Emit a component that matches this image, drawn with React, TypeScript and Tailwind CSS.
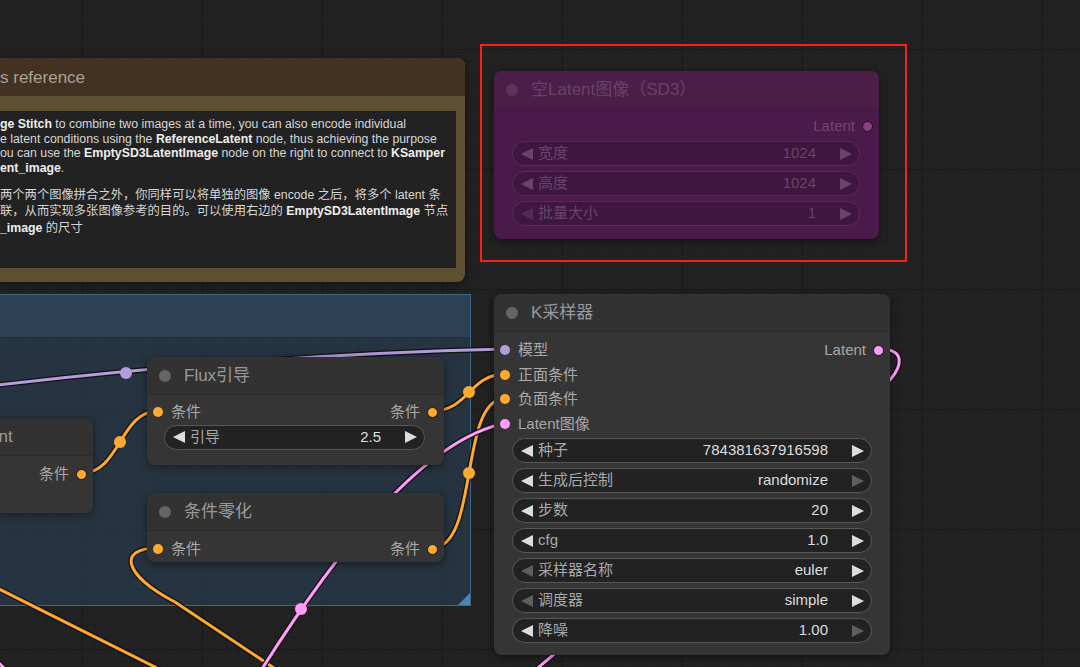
import React from "react";
import clsx from "clsx";

type ArrowProps = { right?: boolean; dim?: boolean; muted?: boolean; className?: string };

function Arrow({ right, dim, muted, className }: ArrowProps) {
  const fill = muted ? (dim ? "#552a53" : "#6a4468") : dim ? "#5e5e5e" : "#dddddd";
  return (
    <svg width="12" height="12" viewBox="0 0 12 12" className={clsx("shrink-0", className)}>
      <path d={right ? "M0 0L12 6L0 12Z" : "M12 0L0 6L12 12Z"} fill={fill} />
    </svg>
  );
}

type WidgetProps = { label: string; value: string; dimL?: boolean; dimR?: boolean; muted?: boolean };

function Widget({ label, value, dimL, dimR, muted }: WidgetProps) {
  return (
    <div
      className={clsx(
        "flex h-[25px] shrink-0 items-center rounded-full border pl-[8px] pr-[7px] text-[15px]",
        muted ? "border-[#592a58] bg-[#3f163f]" : "border-[#585858] bg-[#222222]"
      )}
    >
      <Arrow dim={dimL} muted={muted} />
      <span className={clsx("ml-[5px] whitespace-nowrap", muted ? "text-[#68446a]" : "text-[#a9a9a9]")}>{label}</span>
      <span className={clsx("ml-auto whitespace-nowrap", muted ? "text-[#68446a]" : "text-[#dddddd]")}>{value}</span>
      <Arrow right dim={dimR} muted={muted} className="ml-[24px]" />
    </div>
  );
}

type SlotProps = { inLabel?: string; inColor?: string; outLabel?: string; outColor?: string; muted?: boolean };

function SlotRow({ inLabel, inColor, outLabel, outColor, muted }: SlotProps) {
  return (
    <div className="flex h-[24.5px] shrink-0 items-center text-[15px]">
      {inLabel && (
        <>
          <span className={clsx("ml-[6px] h-[10px] w-[10px] rounded-full", inColor)} />
          <span className="ml-[8px] whitespace-nowrap text-[#a9a9a9]">{inLabel}</span>
        </>
      )}
      {outLabel && (
        <>
          <span className={clsx("ml-auto whitespace-nowrap", muted ? "text-[#704670]" : "text-[#a9a9a9]")}>{outLabel}</span>
          <span className={clsx("ml-[7px] mr-[6px] h-[11px] w-[11px] rounded-full border border-[#151515]", outColor)} />
        </>
      )}
    </div>
  );
}

type NodeProps = { pos: string; title: string; muted?: boolean; children?: React.ReactNode };

function Node({ pos, title, muted, children }: NodeProps) {
  return (
    <div
      className={clsx(
        "absolute flex flex-col rounded-[8px] shadow-[0_2px_8px_rgba(0,0,0,0.45)]",
        pos,
        muted ? "bg-[#4a1b4a]" : "bg-[#353535]"
      )}
    >
      <div
        className={clsx(
          "flex h-[38px] shrink-0 items-center rounded-t-[8px] border-b",
          muted ? "border-[#44183f] bg-[#4b1e4a]" : "border-[#2b2b2b] bg-[#323232]"
        )}
      >
        <span className={clsx("ml-[12px] h-[12px] w-[12px] shrink-0 rounded-full", muted ? "bg-[#5b3358]" : "bg-[#656565]")} />
        <span className={clsx("ml-[13px] whitespace-nowrap text-[17px]", muted ? "text-[#684266]" : "text-[#9a9a9a]")}>
          {title}
        </span>
      </div>
      {children}
    </div>
  );
}

function Wire({ d, color }: { d: string; color: string }) {
  return (
    <>
      <path d={d} fill="none" stroke="#111111" strokeWidth="5.5" strokeLinecap="round" />
      <path d={d} fill="none" stroke={color} strokeWidth="3" strokeLinecap="round" />
    </>
  );
}

const ORANGE = "#ffa931";
const PURPLE = "#b39ddb";
const PINK = "#ff9cf9";

export default function App() {
  return (
    <div className="relative h-[667px] w-[1080px] overflow-hidden bg-[#222222] bg-[linear-gradient(to_right,#1a1a1a_1px,transparent_1px),linear-gradient(to_bottom,#1a1a1a_1px,transparent_1px),linear-gradient(to_right,#1e1e1e_1px,transparent_1px),linear-gradient(to_bottom,#1e1e1e_1px,transparent_1px)] bg-[size:120px_120px,120px_120px,12px_12px,12px_12px] bg-[position:82px_49px] font-['Liberation_Sans','Noto_Sans_CJK_SC',sans-serif]">
      {/* note node */}
      <div className="absolute left-[-20px] top-[58px] flex h-[224px] w-[485px] flex-col rounded-[8px] bg-[#5e4e32] shadow-[0_2px_8px_rgba(0,0,0,0.45)]">
        <div className="flex h-[38px] shrink-0 items-center rounded-t-[8px] bg-[#433222] pl-[20px] pt-[1px] text-[17px] text-[#a9a196]">
          s reference
        </div>
        <div className="mr-[9px] mt-[15px] h-[157px] bg-[#222222] pl-[20px] pt-[6px] text-[12.3px] text-[#d6d6d6]">
          <div className="h-[14.5px] whitespace-nowrap leading-[14.5px]">
            <span className="font-bold text-[#eeeeee]">ge Stitch</span> to combine two images at a time, you can also encode individual
          </div>
          <div className="h-[14.5px] whitespace-nowrap leading-[14.5px]">
            e latent conditions using the <span className="font-bold text-[#eeeeee]">ReferenceLatent</span> node, thus achieving the purpose
          </div>
          <div className="h-[14.5px] whitespace-nowrap leading-[14.5px]">
            ou can use the <span className="font-bold text-[#eeeeee]">EmptySD3LatentImage</span> node on the right to connect to{" "}
            <span className="font-bold text-[#eeeeee]">KSamper</span>
          </div>
          <div className="h-[14.5px] whitespace-nowrap leading-[14.5px]">
            <span className="font-bold text-[#eeeeee]">ent_image</span>.
          </div>
          <div className="h-[11.5px]" />
          <div className="h-[16.5px] whitespace-nowrap leading-[16.5px]">
            两个两个图像拼合之外，你同样可以将单独的图像 encode 之后，将多个 latent 条
          </div>
          <div className="h-[16.5px] whitespace-nowrap leading-[16.5px]">
            联，从而实现多张图像参考的目的。可以使用右边的 <span className="font-bold text-[#eeeeee]">EmptySD3LatentImage</span> 节点
          </div>
          <div className="h-[16.5px] whitespace-nowrap leading-[16.5px]">
            <span className="font-bold text-[#eeeeee]">_image</span> 的尺寸
          </div>
        </div>
      </div>

      {/* group */}
      <div className="absolute left-[-10px] top-[294px] flex h-[312px] w-[481px] flex-col border border-[#3f6788]">
        <div className="h-[42px] shrink-0 bg-[#38628a]/50" />
        <div className="relative flex-1 bg-[#2a4660]/50">
          <div className="absolute bottom-0 right-0 h-0 w-0 border-b-[12px] border-l-[12px] border-b-[#4a86b4] border-l-transparent" />
        </div>
      </div>

      {/* wires */}
      <svg className="absolute left-0 top-0" width="1080" height="667">
        <Wire d="M -10 386 Q 250 355 506 349" color={PURPLE} />
        <Wire d="M 82 473 C 120 473, 120 411, 158 411" color={ORANGE} />
        <Wire d="M 432 411 C 469 411, 469 374, 506 374" color={ORANGE} />
        <Wire d="M 432 548 C 480 548, 458 398, 506 398" color={ORANGE} />
        <Wire d="M 158 548 C 118 548, 122 574, 175 602 L 280 672" color={ORANGE} />
        <Wire d="M -5 587 L 165 672" color={ORANGE} />
        <Wire d="M 255 680 C 330 560, 420 440, 506 423" color={PINK} />
        <Wire d="M 879 349 C 906 349, 902 366, 890 380" color={PINK} />
        <Wire d="M 526 678 L 566 644" color={PINK} />
        <Wire d="M -6 658 L 6 670" color={PINK} />
        <circle cx="126" cy="373" r="6" fill={PURPLE} />
        <circle cx="120" cy="442" r="6" fill={ORANGE} />
        <circle cx="469" cy="392" r="6" fill={ORANGE} />
        <circle cx="469" cy="473" r="6" fill={ORANGE} />
        <circle cx="301" cy="609" r="6" fill={PINK} />
      </svg>

      {/* ReferenceLatent (partial) */}
      <Node pos="left-[-150px] top-[418px] h-[95px] w-[243px]" title="ReferenceLatent">
        <div className="pt-[6px]">
          <SlotRow outLabel="条件" outColor="bg-[#ffa931]" />
        </div>
      </Node>

      {/* Flux guidance */}
      <Node pos="left-[147px] top-[357px] h-[108px] w-[297px]" title="Flux引导">
        <div className="flex flex-col pt-[5px]">
          <SlotRow inLabel="条件" inColor="bg-[#ffa931]" outLabel="条件" outColor="bg-[#ffa931]" />
          <div className="ml-[17px] mr-[19px]">
            <Widget label="引导" value="2.5" />
          </div>
        </div>
      </Node>

      {/* conditioning zero out */}
      <Node pos="left-[147px] top-[493px] h-[69px] w-[297px]" title="条件零化">
        <div className="pt-[6px]">
          <SlotRow inLabel="条件" inColor="bg-[#ffa931]" outLabel="条件" outColor="bg-[#ffa931]" />
        </div>
      </Node>

      {/* Empty SD3 latent (bypassed) */}
      <Node pos="left-[494px] top-[71px] h-[168px] w-[385px]" title="空Latent图像（SD3）" muted>
        <div className="flex flex-col pt-[5px]">
          <SlotRow outLabel="Latent" outColor="bg-[#8b3d89] border-[#4a1b4a]" muted />
          <div className="ml-[18px] mr-[19px] mt-[2.5px] flex flex-col gap-[5px]">
            <Widget label="宽度" value="1024" muted />
            <Widget label="高度" value="1024" muted />
            <Widget label="批量大小" value="1" dimL muted />
          </div>
        </div>
      </Node>

      {/* KSampler */}
      <Node pos="left-[494px] top-[294px] h-[361px] w-[396px]" title="K采样器">
        <div className="flex flex-col pt-[6px]">
          <SlotRow inLabel="模型" inColor="bg-[#b39ddb]" outLabel="Latent" outColor="bg-[#ff9cf9]" />
          <SlotRow inLabel="正面条件" inColor="bg-[#ffa931]" />
          <SlotRow inLabel="负面条件" inColor="bg-[#ffa931]" />
          <SlotRow inLabel="Latent图像" inColor="bg-[#ff9cf9]" />
          <div className="ml-[18px] mr-[18px] mt-[2px] flex flex-col gap-[5px]">
            <Widget label="种子" value="784381637916598" />
            <Widget label="生成后控制" value="randomize" dimR />
            <Widget label="步数" value="20" />
            <Widget label="cfg" value="1.0" />
            <Widget label="采样器名称" value="euler" dimL />
            <Widget label="调度器" value="simple" dimL />
            <Widget label="降噪" value="1.00" dimR />
          </div>
        </div>
      </Node>

      {/* selection box */}
      <div className="absolute left-[480px] top-[44px] h-[218px] w-[427px] border-2 border-[#f2231a]" />
    </div>
  );
}
